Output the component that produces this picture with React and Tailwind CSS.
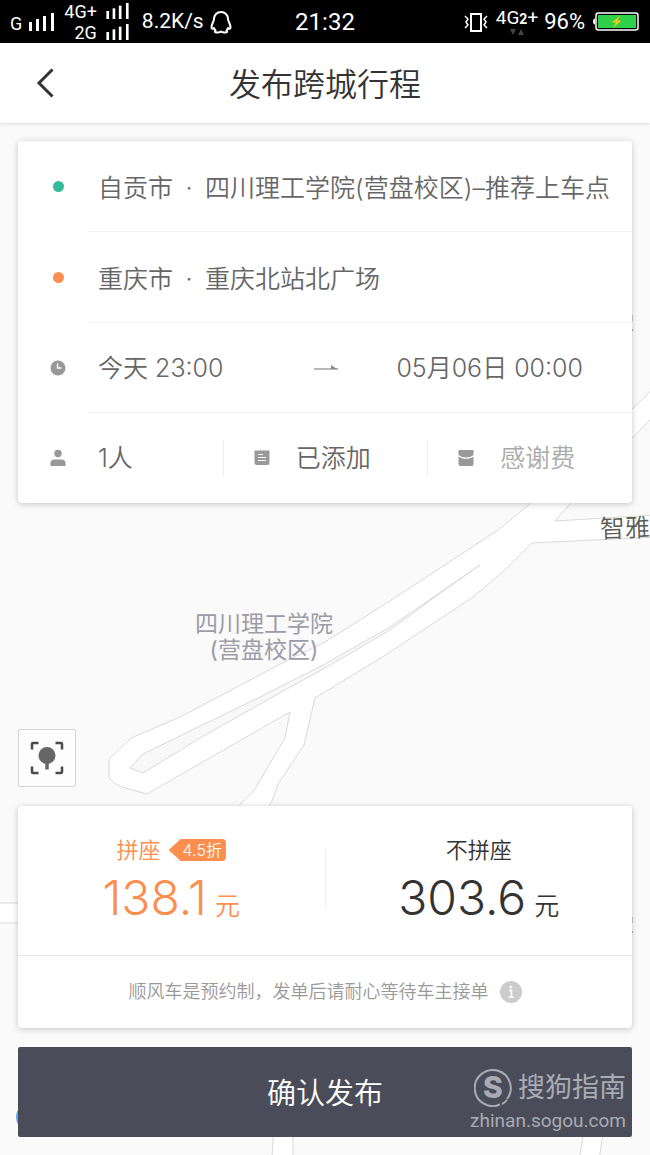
import clsx from "clsx";

const SignalBars = ({ className }) => (
  <svg viewBox="0 0 25 18" className={className} fill="currentColor" aria-hidden="true">
    <rect x="0" y="9" width="3" height="9" />
    <rect x="7" y="6" width="3" height="12" />
    <rect x="14" y="3" width="3" height="15" />
    <rect x="22" y="0" width="3" height="18" />
  </svg>
);

const PenguinIcon = () => (
  <svg viewBox="0 0 22 24" className="h-6 w-[22px]" fill="none" stroke="currentColor" strokeWidth="2" strokeLinejoin="round">
    <path d="M11 2C7 2 4 5 4 9C4 11.500 1.500 13.500 1.500 17.500C1.700 19 3 19 4 18C4.300 19 4.800 19.800 5.600 20.500C4.300 21.200 4.600 22.300 6.200 22.500C8 22.700 9.800 22.400 11 21.600C12.200 22.400 14 22.700 15.800 22.500C17.400 22.300 17.700 21.200 16.400 20.500C17.200 19.800 17.700 19 18 18C19 19 20.300 19 20.500 17.500C20.500 13.500 18 11.500 18 9C18 5 15 2 11 2Z" />
  </svg>
);

const VibrateIcon = () => (
  <svg viewBox="0 0 24 20" className="h-5 w-6" fill="none" stroke="currentColor" strokeWidth="2">
    <rect x="7" y="2" width="10" height="17" />
    <path d="M1 4l3 3-2 3 2 3-3 3M23 4l-3 3 2 3-2 3 3 3" strokeWidth="1.500" />
  </svg>
);

const BatteryIcon = () => (
  <svg viewBox="0 0 47 19" className="h-[19px] w-[47px]">
    <path d="M3 6.500C1.500 6.500 1 8 1 9.500s.5 3 2 3Z" fill="#fff" />
    <rect x="4" y="1" width="42" height="17" rx="2.500" fill="#000" stroke="#fff" strokeWidth="1.500" />
    <rect x="6" y="3" width="38" height="13" fill="#2fd04a" />
    <path d="M28 3.500l-8 7h4l-3 5.500 8.500-7.500h-4Z" fill="#f5c518" />
  </svg>
);

const ClockIcon = () => (
  <svg viewBox="0 0 16 16" className="size-4">
    <circle cx="8" cy="8" r="7.500" fill="#999" />
    <path d="M7.500 3.500v4.500h4" fill="none" stroke="#fff" strokeWidth="1.300" />
  </svg>
);

const PersonIcon = () => (
  <svg viewBox="0 0 16 18" className="h-[18px] w-4" fill="#999">
    <circle cx="8" cy="4.500" r="3.700" />
    <path d="M.5 14.500C.5 11.500 2 10.500 4 10.500h8c2 0 3.500 1 3.500 4v2.500H.5Z" />
  </svg>
);

const NoteIcon = () => (
  <svg viewBox="0 0 16 16" className="size-4">
    <path d="M.5.500h15V13a2 2 0 0 1-2 2h-11a2 2 0 0 1-2-2Z" fill="#999" />
    <path d="M4 4.500h5M4 7.500h8M4 10.500h8" stroke="#fff" strokeWidth="1" />
  </svg>
);

const EnvelopeIcon = () => (
  <svg viewBox="0 0 16 18" className="h-[18px] w-4" fill="#999">
    <path d="M.5 1h15v5c-2 1.700-4.500 2.500-7.500 2.500S2.500 7.700.5 6Z" />
    <path d="M.5 7.500c2.200 1.500 4.700 2.300 7.500 2.300s5.300-.8 7.500-2.300v7.500a2 2 0 0 1-2 2h-11a2 2 0 0 1-2-2Z" />
  </svg>
);

const ArrowIcon = () => (
  <svg viewBox="0 0 24 8" className="h-2 w-6">
    <path d="M0 5h24" stroke="#888" strokeWidth="1.200" />
    <path d="M17 1l6 4h-6Z" fill="#888" />
  </svg>
);

const LocateIcon = () => (
  <svg viewBox="0 0 34 34" className="size-[34px]" fill="none" stroke="#4a4a4a" strokeWidth="2.500">
    <path d="M2 8.500V3a1 1 0 0 1 1-1h5.500M25.500 2H31a1 1 0 0 1 1 1v5.500M32 25.500V31a1 1 0 0 1-1 1h-5.500M8.500 32H3a1 1 0 0 1-1-1v-5.500" />
    <circle cx="17" cy="14.500" r="8.500" fill="#666" stroke="none" />
    <path d="M17 20v8.500" stroke="#666" strokeWidth="3.500" />
  </svg>
);

const MapLayer = () => (
  <svg
    viewBox="0 123 650 1032"
    preserveAspectRatio="xMinYMin slice"
    className="absolute inset-0 size-full"
    stroke="#d9d9d9"
    strokeWidth="1"
    aria-hidden="true"
  >
    {/* main road with its side branches */}
    <path
      fill="#fff"
      d="M655 387L632 409 531 503 498 530 425 578 368 615 325 642 290 659 180 717 131 738 109 759V777Q113 784 122 787L147 794 290 712 285 738 255 789 235 810H267L272 801 278 784 304 745 315 698 325 692 384 656 473 597 505 570 532 543 655 537V515L555 521 571 503 632 438 655 415Z"
    />
    <path fill="#f8f8f8" d="M130 768L143 754 260 697 325 664 390 627 480 565 450 586 390 630 325 668 283 691 200 738 143 773Z" />
    <path fill="#fff" d="M-5 903H30V923H-5Z" />
    <path fill="#fff" d="M274 1120L272 1160H293V1120Z" />
    <path fill="#fff" d="M586 1120L579 1160H599L605 1120Z" />
    <circle cx="31" cy="1117" r="15" fill="#5aacee" stroke="none" />
    <path fill="none" stroke="#999" d="M632 315v6M632 329l1 2M632 917v6M632 931l1 2" />
  </svg>
);

const StatusBar = () => (
  <div className="grid h-[43px] grid-cols-[1fr_auto_1fr] items-center bg-black font-[Roboto,sans-serif] font-normal text-white">
    <div className="flex items-center pl-[10px]">
      <span className="pt-1 text-lg leading-4">G</span>
      <SignalBars className="ml-[7px] h-[18px] w-[25px]" />
      <div className="ml-[10px] flex flex-col items-end">
        <div className="flex items-center gap-2">
          <span className="text-lg leading-[21px]">4G+</span>
          <SignalBars className="h-4 w-[25px]" />
        </div>
        <div className="flex items-center gap-2">
          <span className="text-lg leading-[21px]">2G</span>
          <SignalBars className="h-4 w-[25px]" />
        </div>
      </div>
      <span className="ml-3 text-[21px]">8.2K/s</span>
      <span className="ml-[6px]"><PenguinIcon /></span>
    </div>
    <span className="text-2xl">21:32</span>
    <div className="flex items-center justify-end pr-[11px]">
      <VibrateIcon />
      <div className="ml-2 flex flex-col items-center">
        <span className="text-[19px] leading-5">4G<b className="text-sm">2</b>+</span>
        <svg viewBox="0 0 14 6" className="h-[6px] w-[14px]" fill="#444">
          <path d="M0 0h6L3 6ZM8 6h6L11 0Z" />
        </svg>
      </div>
      <span className="ml-[6px] text-[22px]">96%</span>
      <span className="ml-[7px]"><BatteryIcon /></span>
    </div>
  </div>
);

const PlaceRow = ({ dotClass, city, place }) => (
  <button className="flex h-[90px] w-full items-center text-left whitespace-nowrap">
    <span className="flex w-20 justify-center">
      <span className={clsx("size-[11px] rounded-full", dotClass)} />
    </span>
    <span className="flex pt-1">
      <span>{city}</span>
      <span className="w-8 text-center">·</span>
      <span>{place}</span>
    </span>
  </button>
);

const Divider = () => <div className="ml-[70px] h-px bg-[#f3f3f3]" />;

const OptionCell = ({ icon, label, className }) => (
  <button className={clsx("flex h-9 items-center", className)}>
    {icon}
    <span>{label}</span>
  </button>
);

const TripCard = () => (
  <section className="rounded-sm bg-white text-[25px] leading-9 text-[#666] shadow-[0_1px_6px_rgba(0,0,0,0.22)]">
    <PlaceRow dotClass="bg-[#35bb9b]" city="自贡市" place="四川理工学院(营盘校区)–推荐上车点" />
    <Divider />
    <PlaceRow dotClass="bg-[#fc8f50]" city="重庆市" place="重庆北站北广场" />
    <Divider />
    <button className="flex h-[89px] w-full items-center pr-[49px] text-left">
      <span className="flex w-20 justify-center"><ClockIcon /></span>
      <span>今天 23:00</span>
      <span className="flex flex-1 justify-center pl-8"><ArrowIcon /></span>
      <span>05月06日 00:00</span>
    </button>
    <Divider />
    <div className="grid h-[90px] grid-cols-3 items-center">
      <OptionCell icon={<span className="flex w-20 justify-center"><PersonIcon /></span>} label="1人" />
      <OptionCell
        className="gap-[26px] border-l border-[#eee] pl-[30px]"
        icon={<NoteIcon />}
        label="已添加"
      />
      <OptionCell
        className="gap-[26px] border-l border-[#eee] pl-[30px] text-[#aaa]"
        icon={<EnvelopeIcon />}
        label="感谢费"
      />
    </div>
  </section>
);

const PriceOption = ({ title, price, discount, className }) => (
  <button className={clsx("flex flex-1 flex-col items-center", className)}>
    <span className="flex h-6 items-center gap-2 text-[22px] leading-6">
      {title}
      {discount && (
        <span className="h-[22px] rounded-sm bg-[#fc8f50] pr-1 pl-[14px] text-base leading-[22px] text-white [clip-path:polygon(0_50%,12px_0,100%_0,100%_100%,12px_100%)]">
          {discount}
        </span>
      )}
    </span>
    <span className="flex items-baseline gap-2 text-5xl leading-[72px]">
      {price}
      <span className="text-[25px]">元</span>
    </span>
  </button>
);

const PriceCard = () => (
  <section className="mt-[19px] rounded-sm bg-white shadow-[0_1px_6px_rgba(0,0,0,0.22)]">
    <div className="flex h-[149px] items-start pt-8">
      <PriceOption title="拼座" price="138.1" discount="4.5折" className="text-[#fc8f50]" />
      <span className="mt-[11px] h-[58px] w-px bg-[#eee]" />
      <PriceOption title="不拼座" price="303.6" className="text-[#333]" />
    </div>
    <div className="flex h-[73px] items-center justify-center gap-[11px] border-t border-[#e8e8e8] text-lg text-[#999]">
      顺风车是预约制，发单后请耐心等待车主接单
      <button aria-label="说明">
        <svg viewBox="0 0 22 22" className="size-[22px]">
          <circle cx="11" cy="11" r="11" fill="#ccc" />
          <circle cx="11" cy="6" r="1.500" fill="#fff" />
          <path d="M9 9.500h2.500V16M8.500 16.300h5" fill="none" stroke="#fff" strokeWidth="1.600" />
        </svg>
      </button>
    </div>
  </section>
);

const Watermark = () => (
  <div className="pointer-events-none absolute right-6 bottom-5 font-normal text-[#a9abb4]">
    <div className="flex items-center justify-end gap-[6px]">
      <svg viewBox="0 0 38 38" className="size-[38px]" fill="none" stroke="currentColor" strokeWidth="2">
        <path d="M26 35.500A18 18 0 1 1 33 30M28 35q3-1.500 5-4" />
        <text x="19" y="29" textAnchor="middle" fontSize="30" fontWeight="800" fontFamily="Inter, sans-serif" fill="currentColor" stroke="none">S</text>
      </svg>
      <span className="text-[27px] leading-9">搜狗指南</span>
    </div>
    <p className="text-right font-[Roboto,sans-serif] text-[19px] leading-7">zhinan.sogou.com</p>
  </div>
);

export default function App() {
  return (
    <div className="flex min-h-screen flex-col bg-[#fafafa] font-[Inter,'Noto_Sans_CJK_SC',sans-serif] font-[350]">
      <StatusBar />
      <header className="relative z-10 grid h-20 grid-cols-[1fr_auto_1fr] items-center bg-white shadow-[0_1px_3px_rgba(0,0,0,0.12)]">
        <button aria-label="返回" className="w-fit pl-9">
          <svg viewBox="0 0 18 30" className="h-[30px] w-[18px]" fill="none" stroke="#333" strokeWidth="3">
            <path d="M16.500 1.500L3 15l13.500 13.500" />
          </svg>
        </button>
        <h1 className="pt-1 text-[32px] leading-10 text-[#333]">发布跨城行程</h1>
      </header>

      <main className="relative flex flex-1 flex-col overflow-hidden px-[18px] pt-[18px] pb-[18px]">
        <MapLayer />
        <p className="absolute top-[488px] left-[30%] text-center text-[23px] leading-[26px] font-normal text-[#9c9ca8]">
          四川理工学院
          <br />
          (营盘校区)
        </p>
        <p className="absolute top-[387px] right-0 -rotate-2 text-[25px] leading-9 text-[#5c5c55]">智雅</p>

        <div className="relative flex flex-1 flex-col">
          <TripCard />
          <button
            aria-label="定位"
            className="mt-auto flex size-[58px] items-center justify-center rounded-xs border border-[#d4d4d4] bg-[#fdfdfd]"
          >
            <LocateIcon />
          </button>
          <PriceCard />
          <button className="mt-[19px] h-[90px] w-full rounded-xs bg-[#4a4d59] pt-1 text-[29px] text-white">确认发布</button>
        </div>
        <Watermark />
      </main>
    </div>
  );
}
